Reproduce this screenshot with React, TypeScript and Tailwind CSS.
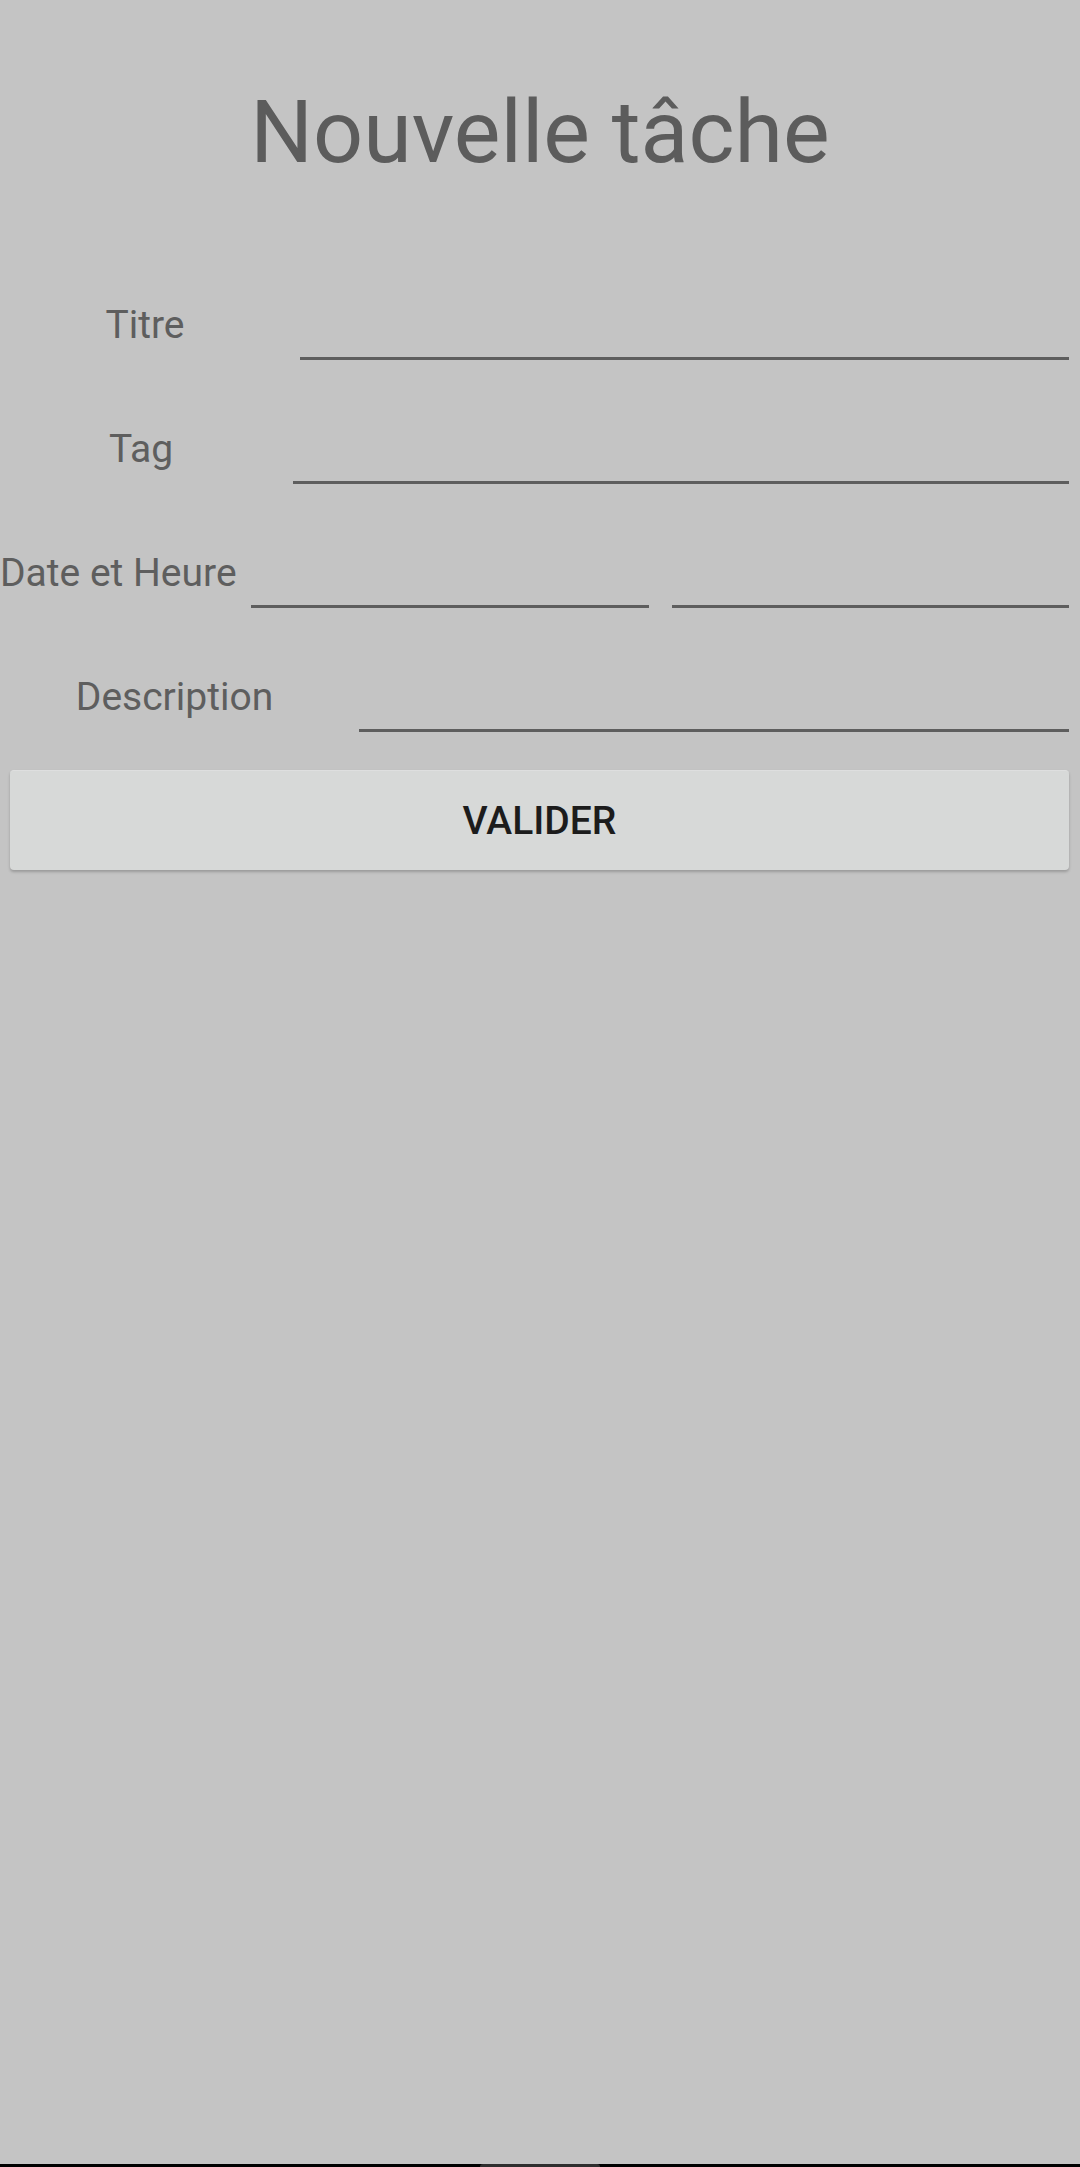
import React from "react";

const font = { fontFamily: "Roboto, 'Noto Sans', Arial, sans-serif" };

function Line({ className = "" }: { className?: string }) {
  return <div className={`h-[3px] bg-[#5e5e5e] ${className}`} />;
}

export default function App() {
  return (
    <div
      className="min-h-[2167px] w-full bg-[#c4c4c4] flex flex-col text-[#5e5e5e]"
      style={font}
    >
      <h1 className="mt-[88px] text-center text-[88px] leading-none font-normal text-[#5c5c5c]">
        Nouvelle tâche
      </h1>

      <div className="mt-[60px] flex flex-col">
        {/* Titre */}
        <div className="h-[124px] flex items-end">
          <div className="w-[290px] text-center text-[39px] leading-none pb-[15px]">Titre</div>
          <Line className="ml-[10px] flex-1 mr-[11px]" />
        </div>
        {/* Tag */}
        <div className="h-[124px] flex items-end">
          <div className="w-[282px] text-center text-[39px] leading-none pb-[15px]">Tag</div>
          <Line className="ml-[11px] flex-1 mr-[11px]" />
        </div>
        {/* Date et Heure */}
        <div className="h-[124px] flex items-end">
          <div className="w-[241px] text-left text-[39px] leading-none pb-[15px] whitespace-nowrap">
            Date et Heure
          </div>
          <div className="ml-[10px] flex-1 mr-[11px] flex gap-[23px]">
            <Line className="flex-1" />
            <Line className="flex-1" />
          </div>
        </div>
        {/* Description */}
        <div className="h-[124px] flex items-end">
          <div className="w-[349px] text-center text-[39px] leading-none pb-[15px]">Description</div>
          <Line className="ml-[10px] flex-1 mr-[11px]" />
        </div>
      </div>

      <button
        type="button"
        className="mt-[38px] ml-[10px] mr-[11px] h-[100px] pt-[2px] rounded-[4px] bg-[#d7d9d8] border-t border-[#dedfdf] shadow-[0_2px_3px_rgba(0,0,0,0.22)] text-[#1c1c1c] text-[39px] font-medium leading-none"
        style={font}
      >
        VALIDER
      </button>

      <div className="flex-1" />
      <div className="h-[3px] bg-black flex justify-center">
        <div className="w-[120px] h-[3px] bg-[#2e2e2e] rounded-t-full" />
      </div>
    </div>
  );
}
